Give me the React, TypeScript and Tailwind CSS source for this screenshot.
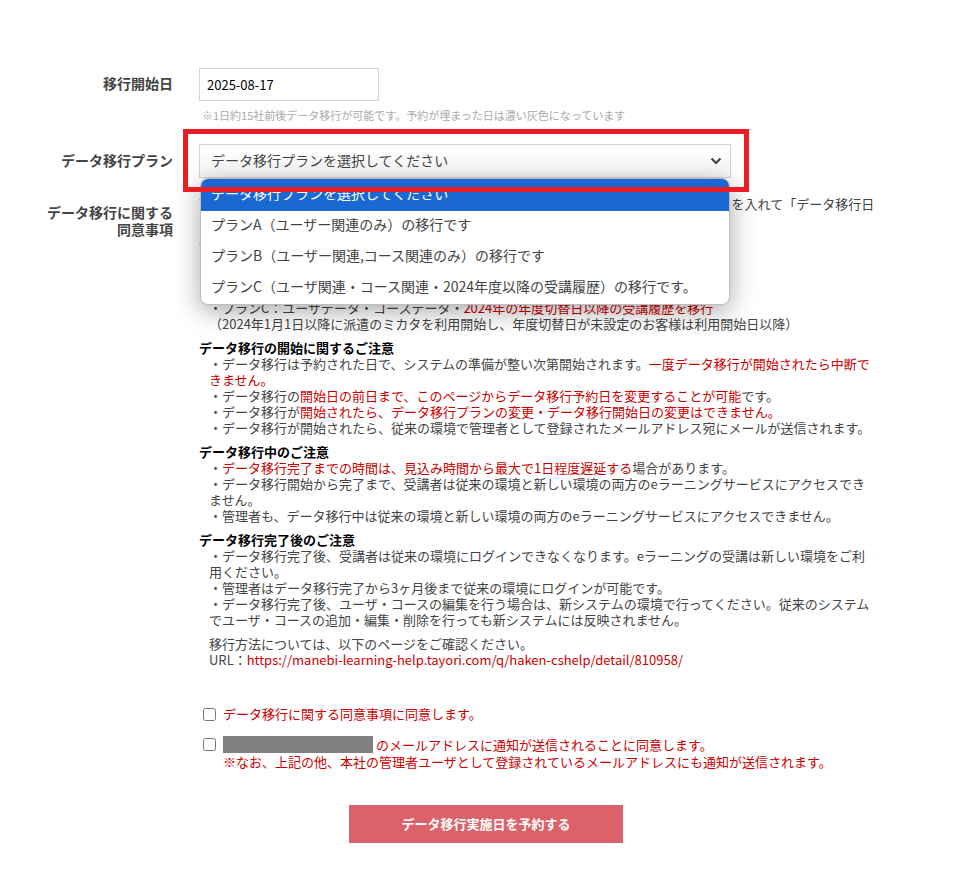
import { ReactNode } from 'react';

interface PlanOption {
    label: string;
}

const planOptions: PlanOption[] = [
    { label: 'データ移行プランを選択してください' },
    { label: 'プランA（ユーザー関連のみ）の移行です' },
    { label: 'プランB（ユーザー関連,コース関連のみ）の移行です' },
    { label: 'プランC（ユーザ関連・コース関連・2024年度以降の受講履歴）の移行です。' },
];

const Red = ({ children }: { children: ReactNode }) => (
    <span className="text-[#cc0000]">{children}</span>
);

function Notice({ title, children }: { title: string; children: ReactNode }) {
    return (
        <div className="mt-[8px]">
            <p className="font-bold text-black">{title}</p>
            <div className="pl-[10px]">{children}</div>
        </div>
    );
}

export default function App() {
    return (
        <div className="min-h-screen bg-white font-['Noto_Sans_CJK_JP','Noto_Sans',sans-serif] text-[#444] pt-[68px] pb-[40px]">
            <div className="grid grid-cols-[130px_678px] gap-x-[26px] pl-[43px]">
                {/* start date */}
                <div className="text-right text-[14px] leading-[20px] font-bold text-[#444] pt-[5px]">移行開始日</div>
                <div>
                    <input
                        type="text"
                        readOnly
                        value="2025-08-17"
                        className="block w-[180px] h-[33px] border border-[#d3d3d3] px-[7px] text-[13px] text-black outline-none"
                    />
                    <p className="mt-[6px] pl-[3px] text-[11px] leading-[16px] text-[#aaa]">
                        ※1日約15社前後データ移行が可能です。予約が埋まった日は濃い灰色になっています
                    </p>
                </div>

                {/* plan select with open list */}
                <div className="mt-[21px] text-right text-[14px] leading-[20px] font-bold text-[#444] pt-[6px]">データ移行プラン</div>
                <div className="mt-[21px] relative z-10 w-[532px]">
                    <div className="flex items-center justify-between h-[34px] border border-[#d3d3d3] bg-gradient-to-b from-white to-[#f6f6f6] pl-[11px] pr-[8px] text-[14px] text-[#444]">
                        <span className="-mt-[2px]">データ移行プランを選択してください</span>
                        <svg width="12" height="8" viewBox="0 0 12 8" fill="none">
                            <polyline points="1.5,1.5 6,6 10.5,1.5" stroke="#444" strokeWidth="2.2" />
                        </svg>
                    </div>
                    <ul className="absolute left-[1px] right-[1px] top-full rounded-[8px] overflow-hidden bg-white border border-[#bdbdbd] shadow-[0_6px_26px_rgba(0,0,0,0.35)] text-[14px] text-[#444]">
                        {planOptions.map((option, index) => (
                            <li
                                key={index}
                                className={
                                    index === 0
                                        ? 'h-[32px] leading-[28px] pl-[10px] bg-[#1a69d3] text-white'
                                        : 'h-[31px] leading-[27px] pl-[10px]'
                                }
                            >
                                {option.label}
                            </li>
                        ))}
                    </ul>
                    <div className="absolute -left-[16px] -top-[15px] -right-[18px] -bottom-[14px] border-[5px] border-[#ed1c24] pointer-events-none z-20" />
                </div>

                {/* agreement text */}
                <div className="mt-[18px] pt-[8px] text-right text-[14px] leading-[17px] font-bold text-[#444]">
                    データ移行に関する<br />同意事項
                </div>
                <div className="mt-[18px] text-[13px] leading-[16px]">
                    <p>
                        下記のご注意事項を必ずご確認のうえ、同意いただける場合はチェックボックスにチェックを入れて「データ移行日を予約する」ボタンを押してください。
                    </p>
                    <Notice title="データ移行プランについて">
                        <p>・プランA：ユーザデータのみを移行</p>
                        <p>・プランB：ユーザデータ・コースデータを移行</p>
                        <p>（受講履歴は移行されません）</p>
                        <p>・プランC：ユーザデータ・コースデータ・<Red>2024年の年度切替日以降の受講履歴を移行</Red></p>
                        <p>（2024年1月1日以降に派遣のミカタを利用開始し、年度切替日が未設定のお客様は利用開始日以降）</p>
                    </Notice>
                    <Notice title="データ移行の開始に関するご注意">
                        <p>・データ移行は予約された日で、システムの準備が整い次第開始されます。<Red>一度データ移行が開始されたら中断できません。</Red></p>
                        <p>・データ移行の<Red>開始日の前日まで、このページからデータ移行予約日を変更することが可能</Red>です。</p>
                        <p>・データ移行が<Red>開始されたら、データ移行プランの変更・データ移行開始日の変更はできません。</Red></p>
                        <p>・データ移行が開始されたら、従来の環境で管理者として登録されたメールアドレス宛にメールが送信されます。</p>
                    </Notice>
                    <Notice title="データ移行中のご注意">
                        <p>・<Red>データ移行完了までの時間は、見込み時間から最大で1日程度遅延する</Red>場合があります。</p>
                        <p>・データ移行開始から完了まで、受講者は従来の環境と新しい環境の両方のeラーニングサービスにアクセスできません。</p>
                        <p>・管理者も、データ移行中は従来の環境と新しい環境の両方のeラーニングサービスにアクセスできません。</p>
                    </Notice>
                    <Notice title="データ移行完了後のご注意">
                        <p>・データ移行完了後、受講者は従来の環境にログインできなくなります。eラーニングの受講は新しい環境をご利用ください。</p>
                        <p>・管理者はデータ移行完了から3ヶ月後まで従来の環境にログインが可能です。</p>
                        <p>・データ移行完了後、ユーザ・コースの編集を行う場合は、新システムの環境で行ってください。従来のシステムでユーザ・コースの追加・編集・削除を行っても新システムには反映されません。</p>
                    </Notice>
                    <div className="mt-[8px] pl-[10px]">
                        <p>移行方法については、以下のページをご確認ください。</p>
                        <p>URL：<Red>https://manebi-learning-help.tayori.com/q/haken-cshelp/detail/810958/</Red></p>
                    </div>

                    {/* consent checkboxes */}
                    <label className="mt-[38px] flex items-center gap-[7px] pl-[4px] text-[#cc0000]">
                        <input type="checkbox" className="m-0 w-[13px] h-[13px]" />
                        <span>データ移行に関する同意事項に同意します。</span>
                    </label>
                    <label className="mt-[14px] flex items-start gap-[7px] pl-[4px] text-[#cc0000] leading-[17px]">
                        <input type="checkbox" className="m-0 mt-[2px] w-[13px] h-[13px]" />
                        <span>
                            <span className="flex items-center">
                                <span className="inline-block w-[150px] h-[17px] bg-[#808080] mr-[3px]" />
                                のメールアドレスに通知が送信されることに同意します。
                            </span>
                            <span className="block">※なお、上記の他、本社の管理者ユーザとして登録されているメールアドレスにも通知が送信されます。</span>
                        </span>
                    </label>
                </div>
            </div>

            <div className="mt-[35px] flex justify-center">
                <button className="w-[274px] h-[38px] bg-[#dc6169] text-white text-[13px] font-bold">
                    データ移行実施日を予約する
                </button>
            </div>
        </div>
    );
}
